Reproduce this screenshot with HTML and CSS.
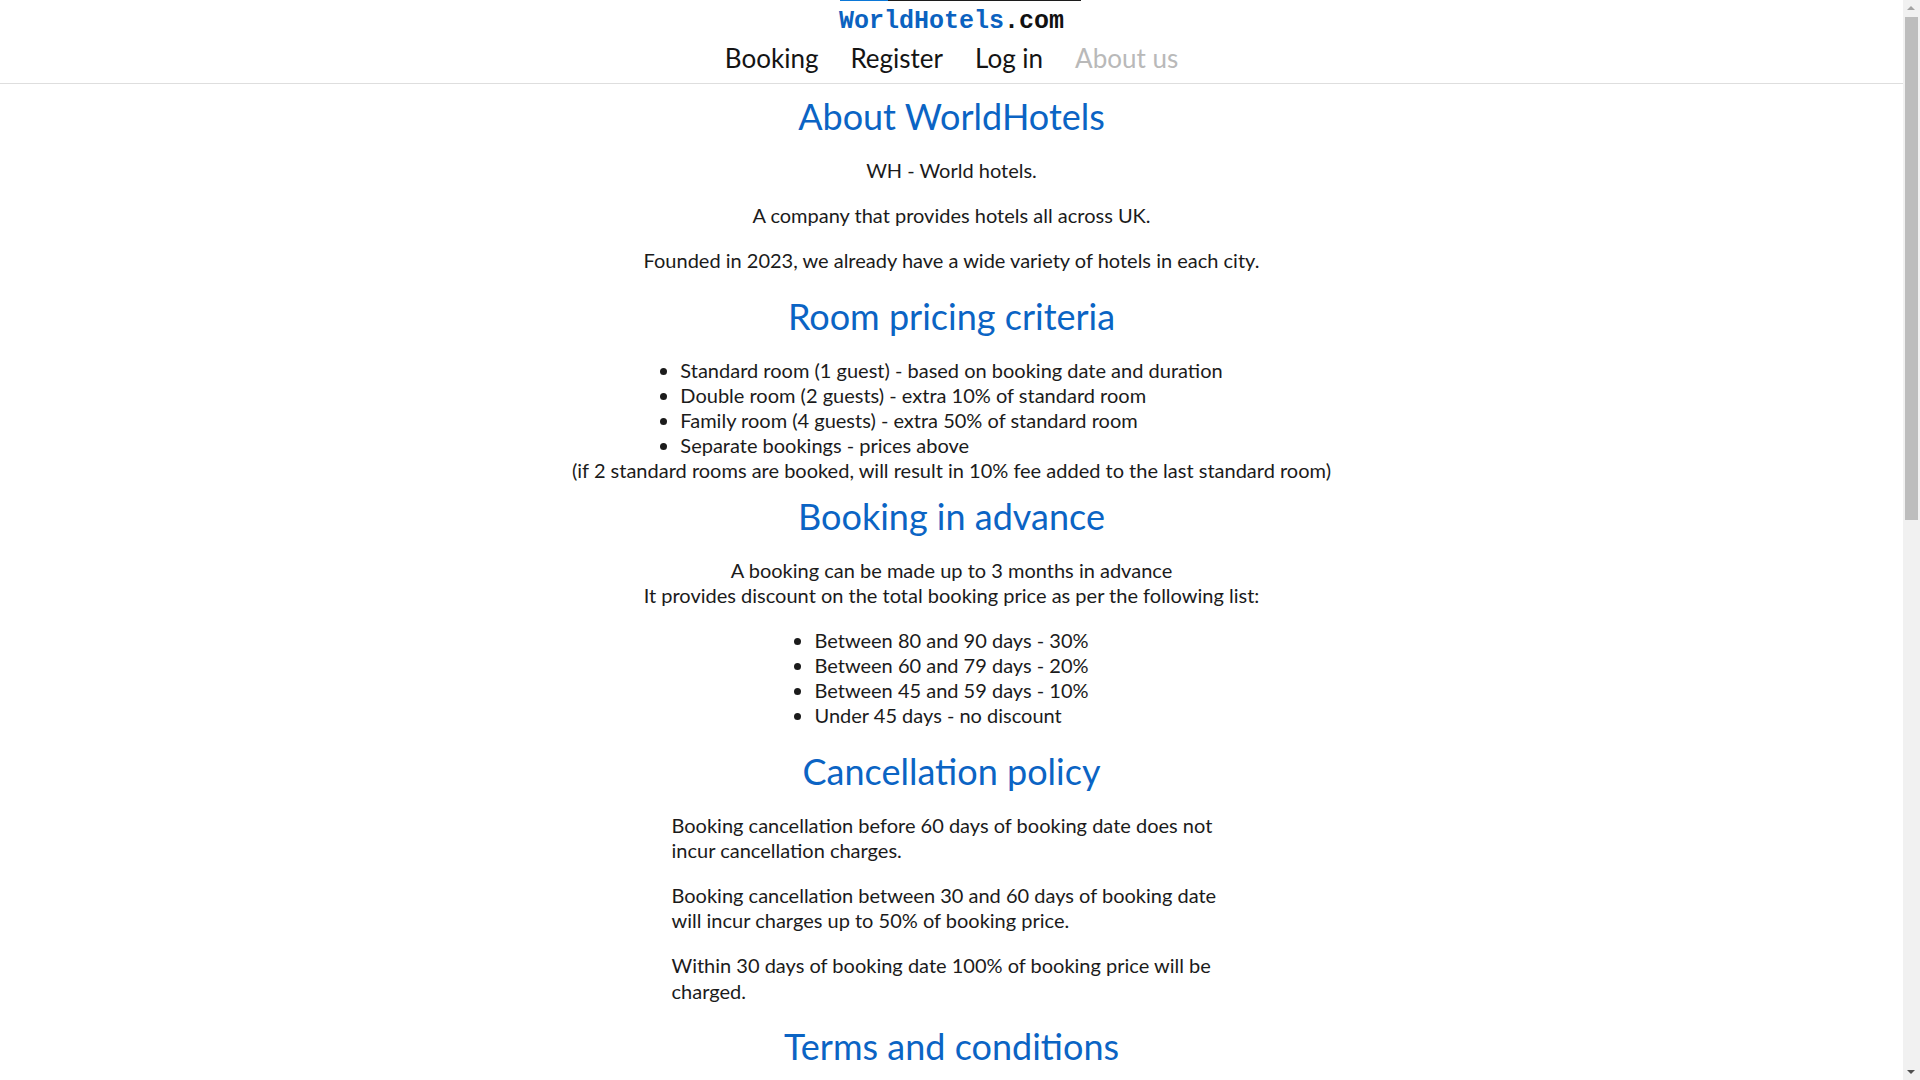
FILE: index.html
```html
<!DOCTYPE html>
<html lang="en">
<head>
<meta charset="utf-8">
<title>About us - WorldHotels.com</title>
<link rel="stylesheet" href="styles.css">
</head>
<body>
<header class="site-header">
  <div class="brand">
    <a class="brand-link" href="#"><span class="brand-name">WorldHotels</span><span class="brand-tld">.com</span></a>
  </div>
  <nav class="main-nav">
    <a class="nav-link" href="#">Booking</a>
    <a class="nav-link" href="#">Register</a>
    <a class="nav-link" href="#">Log in</a>
    <a class="nav-link nav-link--active" href="#">About us</a>
  </nav>
</header>

<main class="content">
  <h2 class="section-title">About WorldHotels</h2>
  <p class="text">WH - World hotels.</p>
  <p class="text">A company that provides hotels all across UK.</p>
  <p class="text">Founded in 2023, we already have a wide variety of hotels in each city.</p>

  <h2 class="section-title">Room pricing criteria</h2>
  <ul class="bullets bullets--tight">
    <li>Standard room (1 guest) - based on booking date and duration</li>
    <li>Double room (2 guests) - extra 10% of standard room</li>
    <li>Family room (4 guests) - extra 50% of standard room</li>
    <li>Separate bookings - prices above</li>
  </ul>
  <p class="note">(if 2 standard rooms are booked, will result in 10% fee added to the last standard room)</p>

  <h2 class="section-title">Booking in advance</h2>
  <p class="text">A booking can be made up to 3 months in advance<br>It provides discount on the total booking price as per the following list:</p>
  <ul class="bullets">
    <li>Between 80 and 90 days - 30%</li>
    <li>Between 60 and 79 days - 20%</li>
    <li>Between 45 and 59 days - 10%</li>
    <li>Under 45 days - no discount</li>
  </ul>

  <h2 class="section-title">Cancellation policy</h2>
  <div class="policy">
    <p class="text">Booking cancellation before 60 days of booking date does not incur cancellation charges.</p>
    <p class="text">Booking cancellation between 30 and 60 days of booking date will incur charges up to 50% of booking price.</p>
    <p class="text">Within 30 days of booking date 100% of booking price will be charged.</p>
  </div>

  <h2 class="section-title">Terms and conditions</h2>
  <div class="terms"></div>
</main>

<div class="scrollbar" aria-hidden="true">
  <div class="scrollbar-btn scrollbar-btn--up"></div>
  <div class="scrollbar-track">
    <div class="scrollbar-thumb"></div>
  </div>
  <div class="scrollbar-btn scrollbar-btn--down"></div>
</div>
</body>
</html>
```
FILE: styles.css
```css
html {
  background: #ffffff;
}

body {
  margin: 0;
  padding-right: 17px;
  font-family: "Lato", "Open Sans", sans-serif;
  font-size: 20px;
  line-height: 1.26;
  color: #1b1b1b;
  background: #ffffff;
}

a {
  text-decoration: none;
  color: inherit;
}

/* ---------- header ---------- */
.site-header {
  text-align: center;
  border-bottom: 1px solid #dedede;
  padding-bottom: 6px;
}

.brand {
  padding-top: 3px;
  font-family: "Liberation Mono", "DejaVu Sans Mono", monospace;
  font-weight: 700;
  font-size: 25px;
  line-height: 38px;
  height: 37px;
}

.brand-link {
  position: relative;
  display: inline-block;
  vertical-align: top;
}

.brand-link::before {
  content: "";
  position: absolute;
  top: -3px;
  left: 1px;
  width: 241px;
  height: 1px;
  background: linear-gradient(to right, #0b78d8 0, #0b78d8 48px, #1c1c1c 48px, #1c1c1c 100%);
}

.brand-name {
  color: #0b62c0;
}

.brand-tld {
  color: #111111;
}

.main-nav {
  display: flex;
  justify-content: center;
  gap: 32px;
  font-size: 26px;
  line-height: 36px;
  height: 37px;
}

.nav-link {
  color: #141414;
}

.nav-link--active {
  color: #b9b9b9;
}

/* ---------- content ---------- */
.content {
  text-align: center;
  padding-bottom: 1168px;
}

.section-title {
  margin: 10px 0;
  font-size: 36px;
  line-height: 44px;
  font-weight: 400;
  color: #0b64c4;
}

.text {
  margin: 20px 0;
}

.note {
  margin: 0;
}

.bullets {
  display: table;
  margin: 20px auto;
  padding: 0;
  text-align: left;
  list-style: disc outside;
}

.bullets--tight {
  margin-bottom: 0;
}

.policy {
  width: 560px;
  margin: 0 auto;
  text-align: left;
}

/* ---------- browser scrollbar ---------- */
.scrollbar {
  position: fixed;
  top: 0;
  right: 0;
  width: 17px;
  height: 100vh;
  display: flex;
  flex-direction: column;
  background: #f1f1f1;
}

.scrollbar-btn {
  position: relative;
  flex: 0 0 17px;
  height: 17px;
}

.scrollbar-btn::after {
  content: "";
  position: absolute;
  left: 4px;
  width: 0;
  height: 0;
  border-left: 4px solid transparent;
  border-right: 4px solid transparent;
}

.scrollbar-btn--up::after {
  top: 6px;
  border-bottom: 4px solid #a3a3a3;
}

.scrollbar-btn--down::after {
  top: 7px;
  border-top: 4px solid #505050;
}

.scrollbar-track {
  flex: 1;
  padding: 0 2px;
}

.scrollbar-thumb {
  height: 503px;
  background: #bdbdbd;
}
```
